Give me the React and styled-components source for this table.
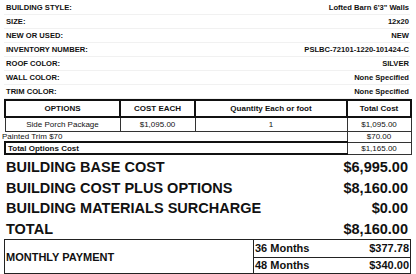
import styled, { createGlobalStyle } from "styled-components";

const GlobalStyle = createGlobalStyle`
  html, body {
    margin: 0;
    padding: 0;
    background: #fff;
  }
  body {
    font-family: "Liberation Sans", Arial, sans-serif;
    color: #111;
  }
`;

const Page = styled.div`
  width: 416px;
  height: 274px;
  padding: 1px 6px 0 4px;
  box-sizing: border-box;
  overflow: hidden;
`;

const InfoList = styled.div`
  display: flex;
  flex-direction: column;
`;

const InfoRow = styled.div`
  height: 14px;
  display: flex;
  align-items: center;
  justify-content: space-between;
  padding: 0 1px 0 2px;
  font-size: 7.6px;
  font-weight: bold;
  border-bottom: 1px solid #f1f1f1;
  box-sizing: border-box;
`;

const OptionsTable = styled.table`
  width: 406px;
  border-collapse: collapse;
  font-size: 8px;
  table-layout: fixed;

  th {
    height: 15px;
    border: 2px solid #111;
    font-weight: bold;
    font-size: 8px;
    padding: 0;
  }
  td {
    border: 1px solid #333;
    padding: 0;
    text-align: center;
  }
`;

const Row = styled.tr`
  height: ${(p) => p.$h}px;
`;

const PlainCell = styled.td`
  && {
    text-align: left;
    text-indent: -3px;
    border-left: none;
    border-bottom: 2px solid #111;
  }
`;

const TotalCell = styled.td`
  && {
    text-align: left;
    font-weight: bold;
    padding-left: 2px;
    border-left: 2px solid #111;
    border-bottom: 2px solid #111;
  }
`;

const Totals = styled.div`
  margin-top: 2px;
`;

const BigRow = styled.div`
  height: 20.5px;
  display: flex;
  align-items: center;
  justify-content: space-between;
  padding: 0 2px 0 2px;
  font-size: 14.5px;
  font-weight: bold;
`;

const PayGrid = styled.div`
  display: grid;
  grid-template-columns: 249px 1fr;
  width: 407px;
  height: 35px;
  border: 1px solid #222;
  box-sizing: border-box;
  font-size: 11px;
  font-weight: bold;
`;

const PayLabel = styled.div`
  display: flex;
  align-items: center;
  padding-left: 1px;
  border-right: 1px solid #222;
`;

const PayTerms = styled.div`
  display: grid;
  grid-template-rows: 1fr 1fr;
`;

const TermRow = styled.div`
  display: flex;
  align-items: center;
  justify-content: space-between;
  padding: 0 1px;
  border-top: ${(p) => (p.$first ? "none" : "1.5px solid #222")};
`;

const info = [
  ["BUILDING STYLE:", "Lofted Barn 6'3\" Walls"],
  ["SIZE:", "12x20"],
  ["NEW OR USED:", "NEW"],
  ["INVENTORY NUMBER:", "PSLBC-72101-1220-101424-C"],
  ["ROOF COLOR:", "SILVER"],
  ["WALL COLOR:", "None Specified"],
  ["TRIM COLOR:", "None Specified"],
];

const totals = [
  ["BUILDING BASE COST", "$6,995.00"],
  ["BUILDING COST PLUS OPTIONS", "$8,160.00"],
  ["BUILDING MATERIALS SURCHARGE", "$0.00"],
  ["TOTAL", "$8,160.00"],
];

export default function App() {
  return (
    <>
      <GlobalStyle />
      <Page>
        <InfoList>
          {info.map(([label, value]) => (
            <InfoRow key={label}>
              <span>{label}</span>
              <span>{value}</span>
            </InfoRow>
          ))}
        </InfoList>

        <OptionsTable>
          <colgroup>
            <col style={{ width: 115 }} />
            <col style={{ width: 75 }} />
            <col style={{ width: 152 }} />
            <col style={{ width: 64 }} />
          </colgroup>
          <thead>
            <tr>
              <th>OPTIONS</th>
              <th>COST EACH</th>
              <th>Quantity Each or foot</th>
              <th>Total Cost</th>
            </tr>
          </thead>
          <tbody>
            <Row $h={14}>
              <td>Side Porch Package</td>
              <td>$1,095.00</td>
              <td>1</td>
              <td>$1,095.00</td>
            </Row>
            <Row $h={11}>
              <PlainCell colSpan={3}>Painted Trim $70</PlainCell>
              <td>$70.00</td>
            </Row>
            <Row $h={12}>
              <TotalCell colSpan={3}>Total Options Cost</TotalCell>
              <td>$1,165.00</td>
            </Row>
          </tbody>
        </OptionsTable>

        <Totals>
          {totals.map(([label, value]) => (
            <BigRow key={label}>
              <span>{label}</span>
              <span>{value}</span>
            </BigRow>
          ))}
        </Totals>

        <PayGrid>
          <PayLabel>MONTHLY PAYMENT</PayLabel>
          <PayTerms>
            <TermRow $first>
              <span>36 Months</span>
              <span>$377.78</span>
            </TermRow>
            <TermRow>
              <span>48 Months</span>
              <span>$340.00</span>
            </TermRow>
          </PayTerms>
        </PayGrid>
      </Page>
    </>
  );
}
